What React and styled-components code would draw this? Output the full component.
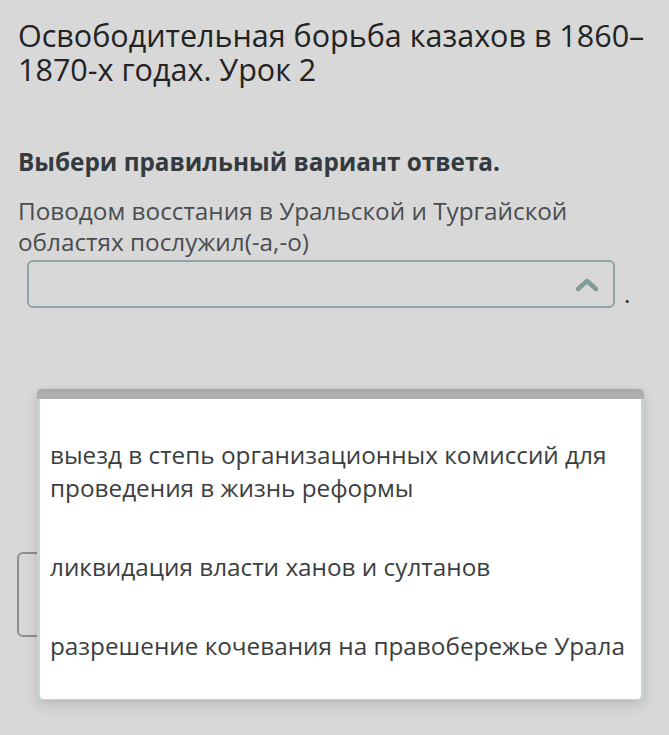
import React from "react";
import styled, { createGlobalStyle } from "styled-components";

const GlobalStyle = createGlobalStyle`
  html, body {
    margin: 0;
    padding: 0;
    background: #d8d8d8;
  }
  body {
    font-family: "Open Sans", "Noto Sans", sans-serif;
  }
`;

const options = [
  "выезд в степь организационных комиссий для проведения в жизнь реформы",
  "ликвидация власти ханов и султанов",
  "разрешение кочевания на правобережье Урала",
];

function App() {
  return (
    <>
      <GlobalStyle />
      <Page>
        <Title>Освободительная борьба казахов в 1860–1870-х годах. Урок 2</Title>
        <Instruction>Выбери правильный вариант ответа.</Instruction>
        <Question>
          Поводом восстания в Уральской и Тургайской областях послужил(-а,-о)
        </Question>
        <AnswerRow>
          <Select>
            <svg width="28" height="18" viewBox="0 0 28 18">
              <path
                d="M5 14 L14 6 L23 14"
                fill="none"
                stroke="#7e9c9c"
                strokeWidth="4.5"
                strokeLinecap="round"
                strokeLinejoin="round"
              />
            </svg>
          </Select>
          <Dot>.</Dot>
        </AnswerRow>
        <NextStub />
        <Dropdown>
          <DropdownBar />
          <OptionList>
            {options.map((o) => (
              <Option key={o}>{o}</Option>
            ))}
          </OptionList>
        </Dropdown>
      </Page>
    </>
  );
}

export default App;

const Page = styled.div`
  position: relative;
  min-height: 735px;
  padding: 18px 18px 0;
  box-sizing: border-box;
  overflow: hidden;
`;

const Title = styled.h1`
  margin: 0;
  font-size: 30.5px;
  line-height: 34px;
  font-weight: 400;
  color: #232323;
`;

const Instruction = styled.div`
  margin-top: 61px;
  font-size: 24.3px;
  line-height: 30px;
  font-weight: 700;
  color: #343a3e;
`;

const Question = styled.div`
  margin-top: 18px;
  font-size: 24.3px;
  line-height: 31px;
  color: #4a4d50;
`;

const AnswerRow = styled.div`
  display: flex;
  align-items: flex-end;
  gap: 9px;
  margin-top: 3px;
  margin-left: 9px;
`;

const Select = styled.div`
  flex: none;
  width: 588px;
  height: 48px;
  box-sizing: border-box;
  border: 2px solid #8ea3a3;
  border-radius: 6px;
  display: flex;
  align-items: center;
  justify-content: flex-end;
  padding-right: 12px;
`;

const Dot = styled.span`
  font-size: 24px;
  line-height: 24px;
  color: #333;
  padding-bottom: 2px;
`;

const NextStub = styled.div`
  margin-top: 244px;
  margin-left: -1px;
  width: 80px;
  height: 85px;
  box-sizing: border-box;
  border: 2px solid #8a8f90;
  border-radius: 6px;
`;

const Dropdown = styled.div`
  position: absolute;
  top: 389px;
  left: 37px;
  width: 607px;
  height: 311px;
  border-radius: 5px;
  background: #c9d3d3;
  padding: 0 3px 1px;
  box-sizing: border-box;
  box-shadow: 0 6px 14px rgba(0, 0, 0, 0.12), 0 0 4px rgba(0, 0, 0, 0.06);
  display: flex;
  flex-direction: column;
  overflow: hidden;
`;

const DropdownBar = styled.div`
  height: 10px;
  margin: 0 -3px;
  background: linear-gradient(#a9a9a9, #b0b0b0);
  flex: none;
`;

const OptionList = styled.div`
  flex: 1;
  background: #fff;
  border-radius: 0 0 4px 4px;
  padding: 16px 10px 14px;
`;

const Option = styled.div`
  padding: 23px 0;
  font-size: 24.3px;
  line-height: 33px;
  color: #3b3e40;
  &:first-child {
    padding-right: 20px;
  }
`;
